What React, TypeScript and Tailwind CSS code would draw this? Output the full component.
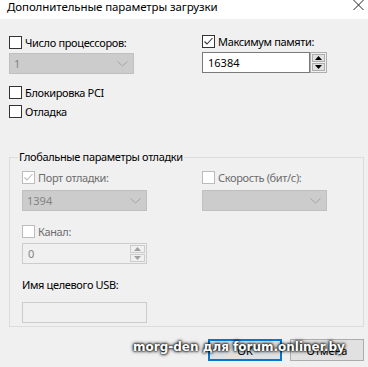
import React from "react";

const font = { fontFamily: '"Noto Sans", "Liberation Sans", sans-serif' };

function Check({ checked = false, disabled = false }: { checked?: boolean; disabled?: boolean }) {
  return (
    <div
      className={
        "w-[13px] h-[13px] shrink-0 border bg-white flex items-center justify-center " +
        (disabled ? "border-[#bcbcbc]" : "border-[#333333]")
      }
    >
      {checked && (
        <svg width="11" height="11" viewBox="0 0 11 11">
          <polyline
            points="1.5,5.5 4,8 9.5,2"
            fill="none"
            stroke={disabled ? "#bcbcbc" : "#333333"}
            strokeWidth="1.1"
          />
        </svg>
      )}
    </div>
  );
}

function CheckRow({
  label,
  checked,
  disabled,
}: {
  label: string;
  checked?: boolean;
  disabled?: boolean;
}) {
  return (
    <div className="flex items-center h-[13px] gap-[3px]">
      <Check checked={checked} disabled={disabled} />
      <span
        className={
          "text-[11px] leading-none tracking-[-0.35px] " + (disabled ? "text-[#6d6d6d]" : "text-black")
        }
      >
        {label}
      </span>
    </div>
  );
}

function Chevron() {
  return (
    <svg width="11" height="6" viewBox="0 0 11 6">
      <polyline points="0.5,0.5 5.5,5 10.5,0.5" fill="none" stroke="#a6a6a6" strokeWidth="1" />
    </svg>
  );
}

function Combo({ value, w = 125 }: { value: string; w?: number }) {
  return (
    <div
      className="h-[21px] bg-[#cccccc] border border-[#bfbfbf] flex items-center justify-between pl-[4px] pr-[5px]"
      style={{ width: w }}
    >
      <span className="text-[11px] leading-none text-[#838383]">{value}</span>
      <Chevron />
    </div>
  );
}

function Arrow({ up, color }: { up?: boolean; color: string }) {
  return (
    <svg width="7" height="4" viewBox="0 0 7 4">
      <polygon points={up ? "0,4 7,4 3.5,0" : "0,0 7,0 3.5,4"} fill={color} />
    </svg>
  );
}

export default function App() {
  return (
    <div className="w-[368px] h-[367px] bg-[#f0f0f0] relative overflow-hidden" style={font}>
      {/* title bar */}
      <div className="h-[19px] bg-white flex items-start justify-between pl-[7px] pr-[4px]">
        <span className="text-[11.5px] leading-none text-black mt-[1px] tracking-[-0.1px]">
          Дополнительные параметры загрузки
        </span>
        <svg width="11" height="10" viewBox="0 0 11 10">
          <line x1="0.5" y1="0" x2="10.5" y2="10" stroke="#222" strokeWidth="1" />
          <line x1="10.5" y1="0" x2="0.5" y2="10" stroke="#222" strokeWidth="1" />
        </svg>
      </div>

      <div className="pl-[9px] pr-[4px]">
        <div className="flex">
          {/* left column */}
          <div className="w-[193px] flex flex-col pt-[17px]">
            <CheckRow label="Число процессоров:" />
            <div className="mt-[4px]">
              <Combo value="1" />
            </div>
            <div className="mt-[12px]">
              <CheckRow label="Блокировка PCI" />
            </div>
            <div className="mt-[6px]">
              <CheckRow label="Отладка" />
            </div>
          </div>
          {/* right column */}
          <div className="flex flex-col pt-[16px]">
            <CheckRow label="Максимум памяти:" checked />
            <div className="mt-[4px] flex h-[21px]">
              <div className="w-[108px] h-[21px] bg-white border border-[#7a7a7a] flex items-center pl-[5px]">
                <span className="text-[11px] leading-none text-black">16384</span>
              </div>
              <div className="w-[17px] h-[21px] border border-[#adadad] bg-[#f0f0f0] flex flex-col p-[1px] gap-[1px]">
                <div className="flex-1 bg-[#e1e1e1] border border-[#adadad] flex items-center justify-center">
                  <Arrow up color="#000" />
                </div>
                <div className="flex-1 bg-[#e1e1e1] border border-[#adadad] flex items-center justify-center">
                  <Arrow color="#000" />
                </div>
              </div>
            </div>
          </div>
        </div>

        {/* group box */}
        <div className="mt-[39px] relative border border-[#dcdcdc] h-[170px] pl-[12px]">
          <span className="absolute left-[8px] top-[-8px] bg-[#f0f0f0] px-[1px] text-[11px] leading-[14px] text-black tracking-[-0.35px]">
            Глобальные параметры отладки
          </span>
          <div className="flex pt-[13px]">
            <div className="w-[180px] flex flex-col">
              <CheckRow label="Порт отладки:" checked disabled />
              <div className="mt-[6px]">
                <Combo value="1394" />
              </div>
              <div className="mt-[14px]">
                <CheckRow label="Канал:" disabled />
              </div>
              <div className="mt-[5px] w-[125px] h-[21px] border border-[#cccccc] bg-[#f0f0f0] flex">
                <div className="flex-1 flex items-center pl-[5px]">
                  <span className="text-[11px] leading-none text-[#838383]">0</span>
                </div>
                <div className="w-[17px] flex flex-col p-[1px] gap-[1px]">
                  <div className="flex-1 bg-[#f0f0f0] border border-[#cccccc] flex items-center justify-center">
                    <Arrow up color="#a0a0a0" />
                  </div>
                  <div className="flex-1 bg-[#f0f0f0] border border-[#cccccc] flex items-center justify-center">
                    <Arrow color="#a0a0a0" />
                  </div>
                </div>
              </div>
              <div className="mt-[14px] text-[11px] leading-[14px] text-black tracking-[-0.35px]">
                Имя целевого USB:
              </div>
              <div className="mt-[10px] w-[125px] h-[21px] border border-[#cccccc] bg-[#f0f0f0]" />
            </div>
            <div className="flex flex-col">
              <CheckRow label="Скорость (бит/с):" disabled />
              <div className="mt-[6px]">
                <Combo value="" />
              </div>
            </div>
          </div>
        </div>

        {/* buttons */}
        <div className="mt-[12px] flex justify-end gap-[8px]">
          <div className="w-[74px] h-[22px] border-2 border-[#0078d7] bg-[#e1e1e1] flex items-center justify-center text-[11px] leading-none text-black">
            OK
          </div>
          <div className="w-[74px] h-[22px] border border-[#adadad] bg-[#e1e1e1] flex items-center justify-center text-[11px] leading-none text-black">
            Отмена
          </div>
        </div>
      </div>

      {/* watermark */}
      <div
        className="absolute left-[133px] top-[339px] text-[12px] font-bold text-white leading-[16px] whitespace-nowrap"
        style={{
          fontFamily: '"DejaVu Sans", sans-serif',
          textShadow: "0 0 2px #000, 0 0 3px #000, 0 0 4px rgba(0,0,0,0.8)",
        }}
      >
        morg-den для forum.onliner.by
      </div>
    </div>
  );
}
